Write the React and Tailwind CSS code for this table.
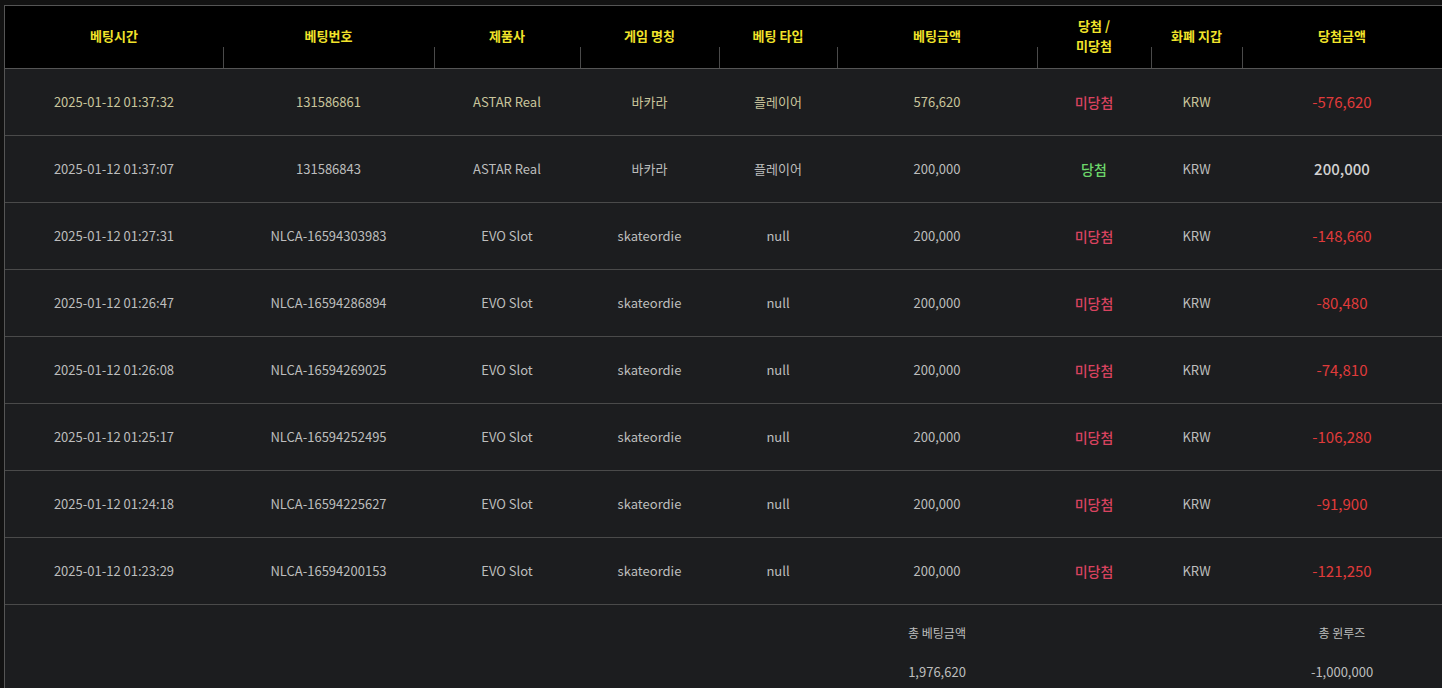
const rows = [
  { time: '2025-01-12 01:37:32', id: '131586861', vendor: 'ASTAR Real', game: '바카라', type: '플레이어', bet: '576,620', win: false, amount: '-576,620', highlight: true },
  { time: '2025-01-12 01:37:07', id: '131586843', vendor: 'ASTAR Real', game: '바카라', type: '플레이어', bet: '200,000', win: true, amount: '200,000' },
  { time: '2025-01-12 01:27:31', id: 'NLCA-16594303983', vendor: 'EVO Slot', game: 'skateordie', type: 'null', bet: '200,000', win: false, amount: '-148,660' },
  { time: '2025-01-12 01:26:47', id: 'NLCA-16594286894', vendor: 'EVO Slot', game: 'skateordie', type: 'null', bet: '200,000', win: false, amount: '-80,480' },
  { time: '2025-01-12 01:26:08', id: 'NLCA-16594269025', vendor: 'EVO Slot', game: 'skateordie', type: 'null', bet: '200,000', win: false, amount: '-74,810' },
  { time: '2025-01-12 01:25:17', id: 'NLCA-16594252495', vendor: 'EVO Slot', game: 'skateordie', type: 'null', bet: '200,000', win: false, amount: '-106,280' },
  { time: '2025-01-12 01:24:18', id: 'NLCA-16594225627', vendor: 'EVO Slot', game: 'skateordie', type: 'null', bet: '200,000', win: false, amount: '-91,900' },
  { time: '2025-01-12 01:23:29', id: 'NLCA-16594200153', vendor: 'EVO Slot', game: 'skateordie', type: 'null', bet: '200,000', win: false, amount: '-121,250' }
];

const headers = ['베팅시간', '베팅번호', '제품사', '게임 명칭', '베팅 타입', '베팅금액', '당첨 /\n미당첨', '화폐 지갑', '당첨금액'];

const gridCols = 'grid grid-cols-[218px_211px_146px_139px_118px_200px_114px_91px_1fr]';

function BetRow({ row }) {
  const base = row.highlight ? 'text-[#c9c59c]' : 'text-[#bdbdbd]';

  return (
    <div className={`${gridCols} h-[67px] items-center border-b border-[#4a4a4a] text-center text-[13px] ${base}`}>
      <div>{row.time}</div>
      <div>{row.id}</div>
      <div>{row.vendor}</div>
      <div>{row.game}</div>
      <div>{row.type}</div>
      <div>{row.bet}</div>
      <div className={`text-[14px] font-medium ${row.win ? 'text-[#6cd66a]' : 'text-[#d9435f]'}`}>
        {row.win ? '당첨' : '미당첨'}
      </div>
      <div>KRW</div>
      <div className={`text-[15px] ${row.win ? 'font-medium text-[#d2d2d2]' : 'text-[#e03b3b]'}`}>
        {row.amount}
      </div>
    </div>
  );
}

export default function App() {
  return (
    <div
      className="flex min-h-[688px] flex-col bg-[#121212] pl-[4px] pt-[5px]"
      style={{ fontFamily: '"Noto Sans CJK KR", "Noto Sans", sans-serif' }}
    >
      <div className="flex-1 border-l border-t border-[#555] bg-[#1c1d1f]">
        <div className={`${gridCols} h-[63px] border-b border-[#555] bg-black text-center text-[13px] font-bold text-[#f1e32a]`}>
          {headers.map((label, index) => (
            <div key={label} className="relative flex items-center justify-center whitespace-pre-line pb-[2px] leading-[20px]">
              {label}
              {index > 0 && <span className="absolute bottom-0 left-0 h-[21px] w-px bg-[#4a4a4a]" />}
            </div>
          ))}
        </div>

        {rows.map((row) => (
          <BetRow key={row.id} row={row} />
        ))}

        <div className={`${gridCols} pb-[10px] pt-[19px] text-center text-[#bdbdbd]`}>
          <div className="col-start-6 text-[12px] leading-[18px]">총 베팅금액</div>
          <div className="col-start-9 text-[12px] leading-[18px]">총 윈루즈</div>
          <div className="col-start-6 mt-[21px] text-[13px] leading-[18px]">1,976,620</div>
          <div className="col-start-9 mt-[21px] text-[13px] leading-[18px]">-1,000,000</div>
        </div>
      </div>
    </div>
  );
}
